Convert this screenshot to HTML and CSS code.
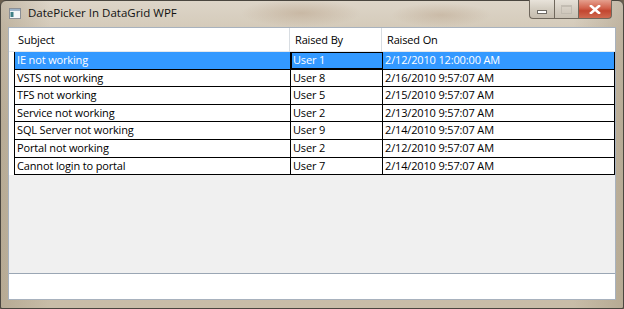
FILE: index.html
```html
<!DOCTYPE html>
<html>
<head>
<meta charset="utf-8">
<link rel="stylesheet" href="styles.css">
</head>
<body>
<div class="window">
  <div class="titlebar">
    <svg class="app-icon" width="12" height="11" viewBox="0 0 12 11">
      <rect x="0.5" y="0.5" width="11" height="10" fill="#f4f6f8" stroke="#8a8f96"/>
      <rect x="1" y="1" width="10" height="2" fill="#9db3c8"/>
      <rect x="1.5" y="4" width="3" height="5" fill="#3f7f86"/>
    </svg>
    <span class="title">DatePicker In DataGrid WPF</span>
    <div class="caption-buttons">
      <div class="cbtn cmin"><span class="min-glyph"></span></div>
      <div class="cbtn cmax"><span class="max-glyph"></span></div>
      <div class="cbtn cclose">
        <svg width="12" height="9" viewBox="0 0 12 9"><path d="M2 1 L10 8 M10 1 L2 8" stroke="#fff" stroke-width="2.6" stroke-linecap="square"/></svg>
      </div>
    </div>
  </div>
  <div class="client">
    <div class="grid">
      <div class="header">
        <div class="hcell">Subject</div>
        <div class="hcell">Raised By</div>
        <div class="hcell">Raised On</div>
      </div>
      <div class="row selected">
        <div class="cell">IE not working</div>
        <div class="cell focus">User 1</div>
        <div class="cell">2/12/2010 12:00:00 AM</div>
      </div>
      <div class="row">
        <div class="cell">VSTS not working</div>
        <div class="cell">User 8</div>
        <div class="cell">2/16/2010 9:57:07 AM</div>
      </div>
      <div class="row">
        <div class="cell">TFS not working</div>
        <div class="cell">User 5</div>
        <div class="cell">2/15/2010 9:57:07 AM</div>
      </div>
      <div class="row">
        <div class="cell">Service not working</div>
        <div class="cell">User 2</div>
        <div class="cell">2/13/2010 9:57:07 AM</div>
      </div>
      <div class="row">
        <div class="cell">SQL Server not working</div>
        <div class="cell">User 9</div>
        <div class="cell">2/14/2010 9:57:07 AM</div>
      </div>
      <div class="row">
        <div class="cell">Portal not working</div>
        <div class="cell">User 2</div>
        <div class="cell">2/12/2010 9:57:07 AM</div>
      </div>
      <div class="row">
        <div class="cell">Cannot login to portal</div>
        <div class="cell">User 7</div>
        <div class="cell">2/14/2010 9:57:07 AM</div>
      </div>
      <div class="filler"></div>
    </div>
    <div class="bottom"></div>
  </div>
</div>
</body>
</html>
```

FILE: styles.css
```css
html, body {
  margin: 0;
  padding: 0;
  width: 624px;
  height: 309px;
  overflow: hidden;
  background: #6b5f4f;
}

.window {
  box-sizing: border-box;
  width: 624px;
  height: 309px;
  display: flex;
  flex-direction: column;
  border: 1px solid #4a463f;
  border-radius: 6px 6px 2px 2px;
  background:
    radial-gradient(ellipse 60px 14px at 300px 12px, rgba(170,140,110,0.35), rgba(170,140,110,0)),
    radial-gradient(ellipse 50px 12px at 440px 14px, rgba(170,140,110,0.3), rgba(170,140,110,0)),
    linear-gradient(90deg, rgba(150,135,110,0.35) 0%, rgba(255,255,255,0) 8%, rgba(255,255,255,0) 92%, rgba(150,135,110,0.35) 100%),
    linear-gradient(180deg, #ddd5c8 0%, #d3c9b8 10%, #cabfab 40%, #c8bda8 100%);
  font-family: "Open Sans", "Noto Sans", sans-serif;
}

.titlebar {
  height: 26px;
  display: flex;
  align-items: flex-start;
  padding-left: 8px;
  position: relative;
}

.app-icon {
  margin-top: 7px;
}

.title {
  margin-left: 7px;
  margin-top: 5px;
  font-size: 11.5px;
  line-height: 14px;
  color: #111;
}

.caption-buttons {
  position: absolute;
  top: -1px;
  right: 11px;
  display: flex;
  height: 19px;
}

.cbtn {
  box-sizing: border-box;
  height: 19px;
  display: flex;
  align-items: center;
  justify-content: center;
  border: 1px solid #6f675c;
  border-top: none;
}

.cmin {
  width: 25px;
  border-radius: 0 0 0 4px;
  border-right: none;
  background: linear-gradient(180deg, #e8e3da 0%, #d3ccc0 50%, #c5bcae 100%);
}

.cmax {
  width: 25px;
  background: linear-gradient(180deg, #e6e1d8 0%, #d5cec3 50%, #c8c0b3 100%);
}

.cclose {
  width: 33px;
  border-left: none;
  border-radius: 0 0 4px 0;
  background: linear-gradient(180deg, #e5a08e 0%, #d2624c 45%, #c24630 60%, #cf6a50 100%);
}

.min-glyph {
  width: 10px;
  height: 4px;
  margin-top: 5px;
  background: #fff;
  border: 1px solid #6e6a64;
  box-sizing: border-box;
}

.max-glyph {
  width: 11px;
  height: 9px;
  box-sizing: border-box;
  border: 1px solid #bdb6ac;
  border-top-width: 2px;
  opacity: 0.8;
}

.client {
  margin: 0 7px 8px 7px;
  flex: 1;
  display: flex;
  flex-direction: column;
  border: 1px solid #a8b2be;
  background: #fff;
}

.grid {
  height: 245px;
  display: flex;
  flex-direction: column;
  background: #f0f0f0;
  border-bottom: 1px solid #9aa6b4;
  font-size: 11px;
  letter-spacing: -0.15px;
  color: #000;
}

.header {
  height: 24px;
  display: grid;
  grid-template-columns: 281px 92px 1fr;
  background: #fff;
  border-bottom: 1px solid #e4e8ec;
  box-sizing: border-box;
}

.hcell {
  padding-left: 9px;
  line-height: 24px;
  border-right: 1px solid #d8dde2;
}

.hcell + .hcell {
  padding-left: 5px;
}

.hcell:last-child {
  border-right: none;
}

.row {
  box-sizing: border-box;
  height: 17.6px;
  display: grid;
  grid-template-columns: 276px 92px 1fr;
  margin-left: 5px;
  border-left: 1px solid #000;
  border-bottom: 1px solid #000;
  background: #fff;
  box-shadow: -5px 0 0 #fff;
}

.cell {
  padding-left: 2px;
  line-height: 16.6px;
  border-right: 1px solid #000;
  white-space: nowrap;
  overflow: hidden;
}

.selected {
  background: #3399ff;
  color: #fff;
}

.selected .cell {
  background: #3399ff;
}

.focus {
  outline: 1px solid #000;
  outline-offset: -1px;
}

.filler {
  flex: 1;
}

.bottom {
  flex: 1;
  background: #fff;
}
```
